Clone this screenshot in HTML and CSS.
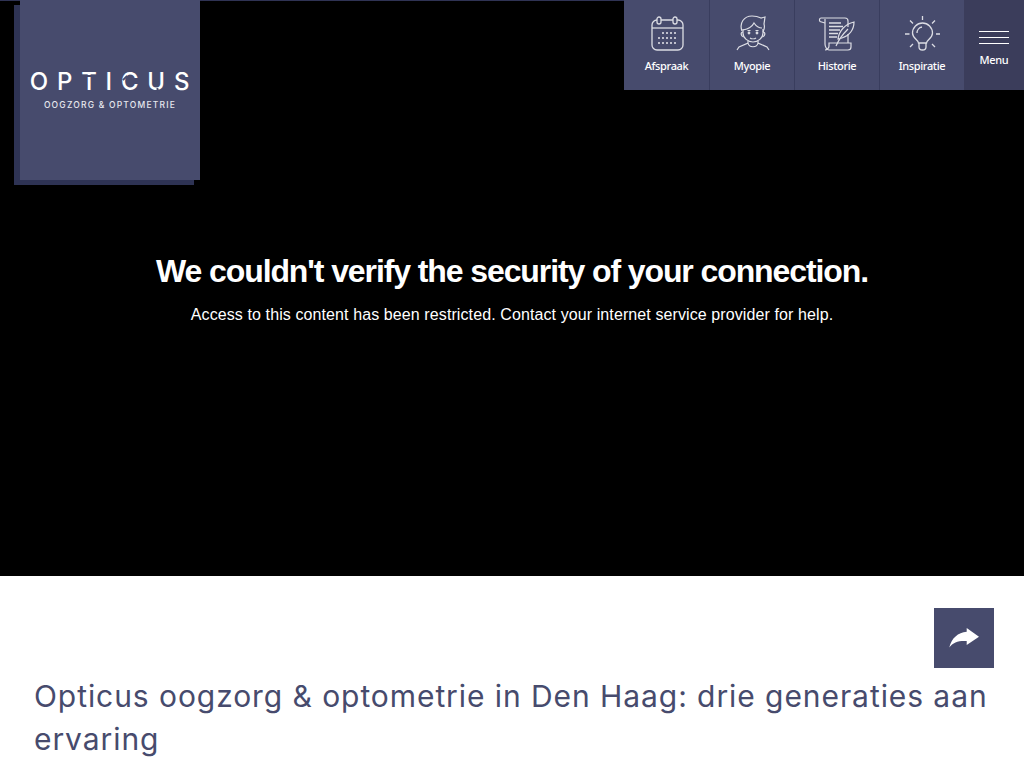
FILE: index.html
```html
<!DOCTYPE html>
<html lang="nl">
<head>
<meta charset="utf-8">
<title>Opticus oogzorg &amp; optometrie</title>
<link rel="stylesheet" href="styles.css">
</head>
<body>
<header class="site-header">
  <a class="logo" href="#">
    <span class="logo-name">OP<span class="cut cut-t">T</span>I<span class="cut cut-c">C</span><span class="cut cut-u">U</span>S</span>
    <span class="logo-sub">OOGZORG &amp; OPTOMETRIE</span>
  </a>
  <nav class="top-nav">
    <a class="nav-item" href="#">
      <svg class="nav-icon" viewBox="0 0 36 36" fill="none" stroke="currentColor" stroke-width="1.300">
        <rect x="3" y="5" width="31" height="30" rx="5"/>
        <path d="M3 13h31"/>
        <rect x="8" y="2" width="4" height="7" rx="2" fill="#474b6d"/>
        <rect x="24" y="2" width="4" height="7" rx="2" fill="#474b6d"/>
        <path d="M13.200 18h1.600M17.200 18h1.600M21.200 18h1.600M25.200 18h1.600M9.200 23h1.600M13.200 23h1.600M17.200 23h1.600M21.200 23h1.600M25.200 23h1.600M9.200 28h1.600M13.200 28h1.600M17.200 28h1.600M21.200 28h1.600M25.200 28h1.600" stroke-width="2"/>
      </svg>
      <span>Afspraak</span>
    </a>
    <a class="nav-item" href="#">
      <svg class="nav-icon" viewBox="0 0 36 36" fill="none" stroke="currentColor" stroke-width="1.200">
        <path d="M8 16C5 8 10 1 18 1c4 0 7 1 9 2l4-1-1 7c1 3 0 6-1 8"/>
        <path d="M9 15c5-1 9-3 11-7 2 3 5 5 8 5"/>
        <path d="M9 14v4c0 5 5 9 10 9s10-4 10-9v-4"/>
        <path d="M9 17c-2.500 0-2.500 4 .5 5M29 17c2.500 0 2.500 4-.5 5"/>
        <path d="M13.500 15.500h3M21.500 15.500h3M16 23c1.500 1 4.500 1 6 0"/>
        <circle cx="15" cy="18" r=".8" fill="currentColor"/>
        <circle cx="23" cy="18" r=".8" fill="currentColor"/>
        <path d="M14 26v2l-9 4-2 3M24 26v2l9 4 2 3M14 28c1 5 9 5 10 0"/>
      </svg>
      <span>Myopie</span>
    </a>
    <a class="nav-item" href="#">
      <svg class="nav-icon" viewBox="0 0 36 36" fill="none" stroke="currentColor" stroke-width="1.200">
        <path d="M2 3h24c2 0 3 1 3 3v6"/>
        <path d="M2 3C.5 3 0 5 1 6.500L6 8"/>
        <path d="M6 4v25c0 3 2 6 4 6h19c2 0 3-1 3-3v-4H10v3c0 2-2 4-4 4"/>
        <path d="M29 19v9"/>
        <path d="M10 8h12M10 11.500h14M10 15h11M10 18.500h9M10 22h8" stroke-width="1.500"/>
        <path d="M19 24c1-8 7-15 16-17 0 8-5 14-12 16zM17 31c3-7 7-12 12-17"/>
      </svg>
      <span>Historie</span>
    </a>
    <a class="nav-item" href="#">
      <svg class="nav-icon" viewBox="0 0 36 36" fill="none" stroke="currentColor" stroke-width="1.300">
        <path d="M14.500 28c0-3-6-4.500-6-10a10 10 0 0 1 20 0c0 5.500-6 7-6 10z"/>
        <path d="M15 28v4c0 4 7 4 7 0v-4"/>
        <path d="M13 18a6 6 0 0 1 5-6"/>
        <path d="M18.500 1v4M6 5.500l3 3M31 5.500l-3 3M1 19h4.500M32 19h4M6 32l3-3M31 32l-3-3"/>
      </svg>
      <span>Inspiratie</span>
    </a>
    <button class="menu-btn" type="button">
      <span class="burger"><i></i><i></i><i></i></span>
      <span>Menu</span>
    </button>
  </nav>
</header>
<main>
  <section class="hero">
    <h2 class="hero-title">We couldn't verify the security of your connection.</h2>
    <p class="hero-text">Access to this content has been restricted. Contact your internet service provider for help.</p>
  </section>
  <section class="intro">
    <div class="share-row">
      <button class="share-btn" type="button" aria-label="Delen">
        <svg viewBox="0 0 30 24" width="30" height="24"><path fill="#fff" d="M17.700 2 L30 10.700 L17.700 19 V15 C10 14.500 4 16 .3 21.500 C2.500 12 9 6.500 17.700 5.700Z"/></svg>
      </button>
    </div>
    <h1 class="intro-title">Opticus oogzorg &amp; optometrie in Den Haag: drie generaties aan ervaring</h1>
  </section>
</main>
</body>
</html>
```

FILE: styles.css
```css
* { box-sizing: border-box; }
html, body { margin: 0; padding: 0; }
body {
  height: 768px;
  overflow: hidden;
  background: #fff;
  font-family: "Liberation Sans", Arial, sans-serif;
  position: relative;
}
.site-header {
  position: absolute;
  inset: 0 0 auto 0;
  display: flex;
  justify-content: space-between;
  align-items: flex-start;
  padding-left: 20px;
  border-top: 1px solid #2f3354;
  z-index: 2;
}
.logo {
  width: 180px;
  height: 180px;
  margin-top: -1px;
  background: #474b6d;
  box-shadow: -6px 5px 0 #2e3354;
  display: flex;
  flex-direction: column;
  align-items: center;
  padding-top: 66px;
  color: #fff;
  text-decoration: none;
}
.logo-name {
  font-family: "Inter", sans-serif;
  font-weight: 500;
  font-size: 24px;
  line-height: 32px;
  letter-spacing: 8.800px;
  margin-right: -8px;
}
.cut { position: relative; }
.cut::after {
  content: "";
  position: absolute;
  background: #474b6d;
}
.cut-t::after { left: 0; top: 8px; width: 17px; height: 1.500px; }
.cut-c::after { left: 1px; top: 10px; width: 6px; height: 2px; transform: rotate(-45deg); }
.cut-u::after { left: 10px; top: 21px; width: 2px; height: 5px; transform: rotate(-20deg); }
.logo-sub {
  font-family: "Inter", sans-serif;
  font-weight: 500;
  font-size: 8.500px;
  line-height: 10px;
  letter-spacing: 1.200px;
  margin-top: 2px;
  color: #e6e7ee;
}
.top-nav {
  display: flex;
  height: 90px;
  margin-top: -1px;
  background: #474b6d;
}
.nav-item {
  width: 85px;
  border-left: 1px solid #393d5e;
  display: flex;
  flex-direction: column;
  align-items: center;
  padding-top: 15px;
  color: #fff;
  text-decoration: none;
  font-family: "Noto Sans", sans-serif;
  font-size: 11px;
  font-weight: 500;
  letter-spacing: -0.35px;
  line-height: 14px;
}
.nav-item:first-child { border-left: 0; }
.nav-icon {
  width: 36px;
  height: 36px;
  color: #dcdde4;
  margin-bottom: 8px;
  overflow: visible;
}
.menu-btn {
  width: 60px;
  border: 0;
  padding: 31px 0 0;
  background: #3b3d5b;
  color: #fff;
  display: flex;
  flex-direction: column;
  align-items: center;
  font-family: "Noto Sans", sans-serif;
  font-size: 11px;
  font-weight: 500;
  letter-spacing: -0.35px;
  line-height: 14px;
}
.burger {
  display: flex;
  flex-direction: column;
  gap: 5px;
  margin-bottom: 9px;
}
.burger i {
  display: block;
  width: 30px;
  height: 1px;
  background: #fff;
}
.hero {
  height: 576px;
  background: #000;
  color: #fff;
  text-align: center;
  padding-top: 252px;
}
.hero-title {
  margin: 0;
  font-size: 32px;
  line-height: 38px;
  font-weight: 700;
  letter-spacing: -1.100px;
}
.hero-text {
  margin: 15px 0 0;
  font-size: 16px;
  letter-spacing: 0.1px;
  line-height: 20px;
}
.intro { padding: 32px 30px 0 34px; }
.share-row { display: flex; justify-content: flex-end; }
.share-btn {
  width: 60px;
  height: 60px;
  border: 0;
  padding: 0;
  background: #474b6d;
  display: flex;
  align-items: center;
  justify-content: center;
}
.intro-title {
  margin: 7px 0 0;
  font-family: "Inter", sans-serif;
  font-weight: 400;
  font-size: 30px;
  letter-spacing: 0.93px;
  line-height: 43px;
  color: #474b6d;
}
```
